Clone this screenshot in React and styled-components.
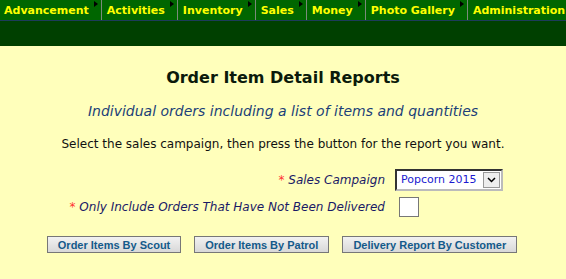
import React from "react";
import styled, { createGlobalStyle } from "styled-components";

const menuItems = [
  { label: "Advancement", arrow: true },
  { label: "Activities", arrow: true },
  { label: "Inventory", arrow: true },
  { label: "Sales", arrow: true },
  { label: "Money", arrow: true },
  { label: "Photo Gallery", arrow: true },
  { label: "Administration", arrow: false },
];

const reports = [
  "Order Items By Scout",
  "Order Items By Patrol",
  "Delivery Report By Customer",
];

const App = () => {
  return (
    <Page>
      <GlobalStyle />
      <MenuBar>
        {menuItems.map((item) => (
          <MenuItem key={item.label} $last={!item.arrow}>
            {item.label}
            {item.arrow && <Arrow />}
          </MenuItem>
        ))}
      </MenuBar>
      <Band />
      <Content>
        <Title>Order Item Detail Reports</Title>
        <Subtitle>Individual orders including a list of items and quantities</Subtitle>
        <Instructions>
          Select the sales campaign, then press the button for the report you want.
        </Instructions>
        <FormGrid>
          <Label>
            <Req>*</Req> Sales Campaign
          </Label>
          <SelectBox>
            <SelectText>Popcorn 2015</SelectText>
            <SelectButton>
              <svg width="9" height="6" viewBox="0 0 9 6">
                <path d="M1 1 L4.5 4.5 L8 1" fill="none" stroke="#000" strokeWidth="1.5" />
              </svg>
            </SelectButton>
          </SelectBox>
          <Label>
            <Req>*</Req> Only Include Orders That Have Not Been Delivered
          </Label>
          <CheckBox />
        </FormGrid>
        <ButtonRow>
          {reports.map((r) => (
            <ReportButton key={r}>{r}</ReportButton>
          ))}
        </ButtonRow>
      </Content>
    </Page>
  );
};

const GlobalStyle = createGlobalStyle`
  html, body {
    margin: 0;
    padding: 0;
    background: #ffffbb;
  }
`;

const Page = styled.div`
  width: 566px;
  height: 279px;
  overflow: hidden;
  background: #ffffbb;
  font-family: "DejaVu Sans", Verdana, sans-serif;
`;

const MenuBar = styled.div`
  display: flex;
  height: 20px;
  background: #006600;
  border-bottom: 1px solid #1d3b5a;
`;

const MenuItem = styled.div`
  position: relative;
  display: flex;
  align-items: center;
  padding: 0 ${(p) => (p.$last ? "0" : "12px")} 0 4px;
  border-right: ${(p) => (p.$last ? "none" : "1px solid #7a8a7a")};
  color: #ffff00;
  font-size: 11px;
  font-weight: bold;
  white-space: nowrap;
  margin-right: 1px;
`;

const Arrow = styled.span`
  position: absolute;
  top: 1px;
  right: 3px;
  width: 0;
  height: 0;
  border-top: 3px solid transparent;
  border-bottom: 3px solid transparent;
  border-left: 4px solid #000;
`;

const Band = styled.div`
  height: 25px;
  background: #004000;
`;

const Content = styled.div`
  display: flex;
  flex-direction: column;
  align-items: center;
`;

const Title = styled.h1`
  margin: 22px 0 0;
  font-size: 16px;
  font-weight: bold;
  color: #0b1a0b;
`;

const Subtitle = styled.div`
  margin-top: 16px;
  font-size: 14px;
  font-style: italic;
  color: #1c3f78;
`;

const Instructions = styled.div`
  margin-top: 18px;
  font-size: 12px;
  color: #111;
`;

const FormGrid = styled.div`
  display: grid;
  grid-template-columns: 330px 110px;
  column-gap: 10px;
  row-gap: 6px;
  align-items: center;
  margin-top: 18px;
  margin-left: -6px;
`;

const Label = styled.div`
  text-align: right;
  font-size: 12px;
  font-style: italic;
  color: #1a1a66;
`;

const Req = styled.span`
  color: #ff3333;
  font-style: normal;
`;

const SelectBox = styled.div`
  justify-self: start;
  display: flex;
  align-items: stretch;
  width: 102px;
  height: 16px;
  background: #fff;
  border-style: solid;
  border-width: 2px;
  border-color: #333 #bbb #bbb #333;
  padding: 1px;
`;

const SelectText = styled.div`
  flex: 1;
  padding-left: 3px;
  font-size: 11px;
  line-height: 16px;
  color: #1a1ad0;
  white-space: nowrap;
  overflow: hidden;
`;

const SelectButton = styled.div`
  width: 17px;
  display: flex;
  align-items: center;
  justify-content: center;
  background: #eee;
  border: 1px solid #999;
  box-sizing: border-box;
`;

const CheckBox = styled.div`
  justify-self: start;
  margin-left: 4px;
  width: 18px;
  height: 18px;
  background: #fff;
  border: 1px solid #777;
`;

const ButtonRow = styled.div`
  display: flex;
  gap: 13px;
  margin-top: 19px;
  margin-left: -2px;
`;

const ReportButton = styled.button`
  height: 17px;
  padding: 0 10px;
  font-family: "Liberation Sans", Arial, sans-serif;
  font-size: 11px;
  font-weight: bold;
  color: #145a8a;
  background: linear-gradient(#f2f2f2, #d8d8d8);
  border: 1px solid #777;
  border-radius: 0;
`;

export default App;
